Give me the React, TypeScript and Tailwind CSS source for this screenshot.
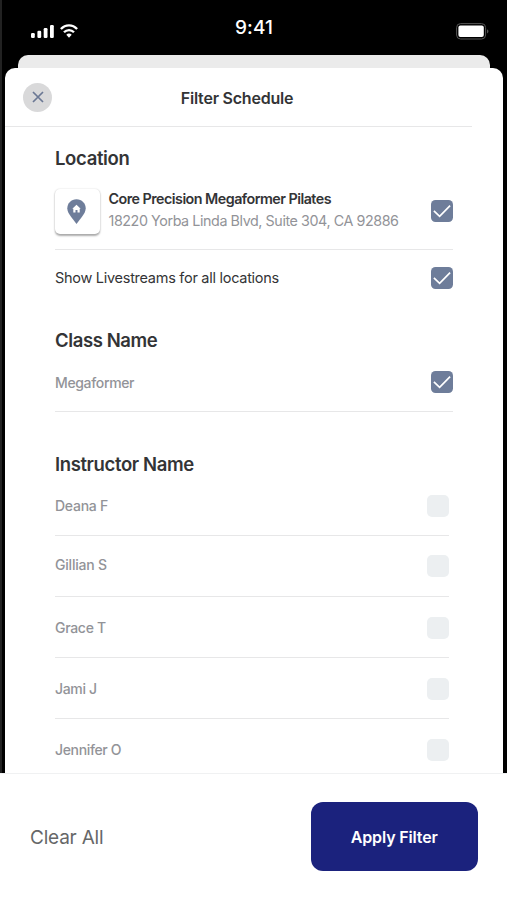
import React from "react";

function Tick({ checked }: { checked: boolean }) {
  if (!checked) return <span className="mr-[4px] size-[22px] shrink-0 rounded-[5px] bg-[#eceff1]" />;
  return (
    <span className="size-[22px] shrink-0 rounded-[4.5px] bg-[#6e7d9a]">
      <svg viewBox="0 0 22 22" className="size-full" fill="none" stroke="#fff" strokeWidth="1.7">
        <path d="M2.9 10.9 8.6 16.4 19.1 5.6" />
      </svg>
    </span>
  );
}

const instructors = [
  { name: "Deana F", row: "h-[59px]", text: "tracking-[-0.25px]" },
  { name: "Gillian S", row: "h-[60px]", text: "tracking-[-0.2px] -mt-[3px]" },
  { name: "Grace T", row: "h-[60px] pt-[2px]", text: "tracking-[-0.3px] -mt-px" },
  { name: "Jami J", row: "h-[60px] pt-px", text: "tracking-[-0.35px]" },
  { name: "Jennifer O", row: "h-[61px]", text: "tracking-[-0.35px]" },
];

export default function App() {
  return (
    <div className="flex h-[900px] w-[507px] flex-col overflow-hidden bg-white font-['Inter','Liberation_Sans',sans-serif] text-[#333436]">
      <div className="flex h-[773px] shrink-0 flex-col border-l-2 border-[#222] bg-black">
        <div className="grid h-[55px] shrink-0 grid-cols-[1fr_60px_1fr] items-center pl-[29px] pr-[18px]">
          <div className="flex items-end gap-[6px] pt-[7px]">
            <svg width="23" height="13" viewBox="0 0 23 13" fill="#fff">
              <rect x="0" y="8" width="3.8" height="5" rx="1.2" />
              <rect x="6.4" y="5.7" width="3.8" height="7.3" rx="1.2" />
              <rect x="12.7" y="3" width="3.8" height="10" rx="1.2" />
              <rect x="19" y="0" width="3.8" height="13" rx="1.2" />
            </svg>
            <svg width="18" height="14" viewBox="0 0 18 14" fill="none" stroke="#fff" strokeWidth="2.3">
              <path d="M.9 5.1C5.4.1 12.6.1 17.1 5.1" />
              <path d="M4 8.3c2.8-3 7.2-3 10 0" />
              <path d="M6.3 10.8c1.5-1.6 3.9-1.6 5.4 0L9 13.7Z" fill="#fff" stroke="none" />
            </svg>
          </div>
          <div className="-ml-[12px] text-center text-[19px] font-medium leading-6 tracking-[0.1px] text-white">9:41</div>
          <svg className="mt-[7px] justify-self-end" width="33" height="17" viewBox="0 0 33 17" fill="none">
            <rect x=".6" y=".6" width="29" height="15.4" rx="4" stroke="#555" strokeWidth="1" />
            <rect x="2.4" y="2.6" width="25.4" height="11.4" rx="2" fill="#fff" />
            <path d="M31 6.2c2 .8 2 3.4 0 4.2Z" fill="#555" />
          </svg>
        </div>
        <div className="ml-4 h-[13px] w-[472px] shrink-0 rounded-t-[10px] bg-[#ebebeb]" />
        <div className="ml-[3px] flex min-h-0 w-[498px] flex-1 flex-col rounded-t-[10px] bg-white">
          <div className="grid h-[59px] w-[467px] shrink-0 grid-cols-[48px_1fr_49px] items-center border-b border-[#e7e7e8]">
            <span className="ml-[18px] flex size-[29px] items-center justify-center rounded-full bg-[#d9d9da]">
              <svg width="12" height="12" viewBox="0 0 12 12" stroke="#6b7894" strokeWidth="1.7">
                <path d="M1 1 11 11M11 1 1 11" />
              </svg>
            </span>
            <h1 className="mr-[2px] mt-px whitespace-nowrap text-center text-[16px] font-semibold tracking-[-0.22px]">Filter Schedule</h1>
          </div>
          <div className="ml-[50px] w-[398px]">
            <h2 className="h-[62px] text-[18.5px] font-semibold leading-[62px] tracking-[-0.35px]">Location</h2>
            <div className="flex h-[61px] border-b border-[#e7e7e8]">
              <span className="-ml-[0.5px] flex size-[45px] items-center justify-center rounded-[5px] bg-white pr-[2px] shadow-[0_1.5px_2px_rgba(0,0,0,0.32),0_0_2px_rgba(0,0,0,0.1)]">
                <svg width="19" height="25" viewBox="0 0 19 25">
                  <path d="M9.5.2C4.2.2.3 4.2.3 9.3c0 3.2 1.7 5.8 3.9 8.7l5.3 6.9 5.3-6.9c2.2-2.9 3.9-5.5 3.9-8.7C18.7 4.2 14.8.2 9.5.2Z" fill="#6e7d9a" />
                  <path d="M9.5 5.8 5.3 9.7h1v3.9h2.2v-2.5h2v2.5h2.2V9.7h1Z" fill="#fff" />
                </svg>
              </span>
              <div className="ml-[9px] flex-1 whitespace-nowrap">
                <div className="text-[14.3px] font-semibold leading-[19px] tracking-[-0.52px]">Core Precision Megaformer Pilates</div>
                <div className="mt-[2px] text-[14.3px] leading-[22px] tracking-[-0.42px] text-[#929398]">18220 Yorba Linda Blvd, Suite 304, CA 92886</div>
              </div>
              <span className="mt-[11px] flex"><Tick checked /></span>
            </div>
            <div className="flex h-[56px] items-center justify-between text-[14.5px] tracking-[-0.28px]">
              <span>Show Livestreams for all locations</span>
              <Tick checked />
            </div>
            <h2 className="mb-px mt-[22px] h-6 text-[18.5px] font-semibold leading-6 tracking-[-0.4px]">Class Name</h2>
            <div className="flex h-[59px] items-center justify-between border-b border-[#e7e7e8] text-[14px] font-medium tracking-[-0.35px] text-[#929398]">
              <span>Megaformer</span>
              <Tick checked />
            </div>
            <h2 className="mt-10 h-6 text-[18.5px] font-semibold leading-6 tracking-[-0.38px]">Instructor Name</h2>
            {instructors.map((p, i) => (
              <React.Fragment key={p.name}>
                <div className={`flex items-center justify-between text-[14px] font-medium text-[#929398] ${p.row}`}>
                  <span className={p.text}>{p.name}</span>
                  <Tick checked={false} />
                </div>
                {i < 4 && <div className="mr-[4px] h-px bg-[#e7e7e8]" />}
              </React.Fragment>
            ))}
          </div>
        </div>
      </div>
      <footer className="flex flex-1 items-start justify-between border-t border-[#f0f1f2] bg-white pl-[30px] pr-[29.5px] pt-[28px]">
        <button className="mt-px h-[70px] text-[19px] tracking-[-0.2px] text-[#666768]">Clear All</button>
        <button className="h-[68.5px] w-[166.5px] rounded-[12px] bg-[#1b227d] pt-px text-[16px] font-semibold tracking-[-0.15px] text-white">Apply Filter</button>
      </footer>
    </div>
  );
}
